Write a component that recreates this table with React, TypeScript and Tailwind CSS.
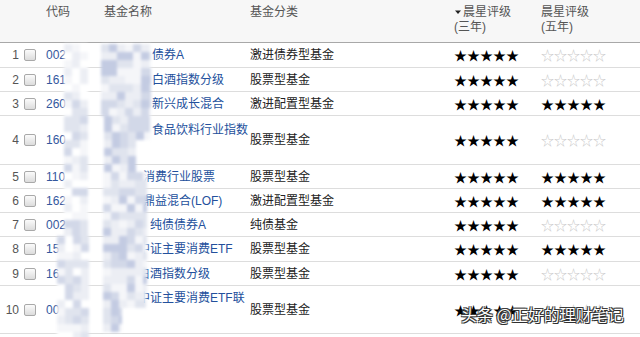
import React from "react";

type Row = {
  no: string;
  code: string;
  name: string;
  nameX: number;
  cat: string;
  s3: number;
  s5: number;
  h: number;
  double?: boolean;
  namePt?: number;
};

const rows: Row[] = [
  { no: "1", code: "002", name: "债券A", nameX: 152, cat: "激进债券型基金", s3: 5, s5: 0, h: 25 },
  { no: "2", code: "161", name: "白酒指数分级", nameX: 152, cat: "股票型基金", s3: 5, s5: 0, h: 24 },
  { no: "3", code: "260", name: "新兴成长混合", nameX: 152, cat: "激进配置型基金", s3: 5, s5: 5, h: 24 },
  { no: "4", code: "160", name: "食品饮料行业指数", nameX: 152, cat: "股票型基金", s3: 5, s5: 0, h: 49, double: true, namePt: 3 },
  { no: "5", code: "110", name: "消费行业股票", nameX: 143, cat: "股票型基金", s3: 5, s5: 5, h: 24 },
  { no: "6", code: "162", name: "鼎益混合(LOF)", nameX: 143, cat: "激进配置型基金", s3: 5, s5: 5, h: 24 },
  { no: "7", code: "002", name: "纯债债券A", nameX: 150, cat: "纯债基金", s3: 5, s5: 0, h: 24 },
  { no: "8", code: "150", name: "中证主要消费ETF", nameX: 138, cat: "股票型基金", s3: 5, s5: 5, h: 25 },
  { no: "9", code: "160", name: "白酒指数分级", nameX: 138, cat: "股票型基金", s3: 5, s5: 0, h: 24 },
  { no: "10", code: "000", name: "中证主要消费ETF联", nameX: 138, cat: "股票型基金", s3: 5, s5: 0, h: 48, double: true, namePt: 1 },
];

const palette = ["#ffffff", "#f5f6f9", "#eceef4", "#e0e4ee", "#d2d8e8", "#c3cbe2"];

function makeTiles() {
  let seed = 17;
  const rnd = () => {
    seed = (seed * 1103515245 + 12345) % 2147483648;
    return seed / 2147483648;
  };
  const tiles: { x: number; y: number; w: number; h: number; c: string }[] = [];
  // code column mosaic
  for (let y = 44; y < 335; y += 8) {
    const x0 = y >= 236 ? 57 : 64;
    for (let x = x0; x < 88; x += 8) {
      const r = rnd();
      const idx = y < 85 ? Math.floor(r * 3) : Math.floor(r * 5);
      tiles.push({ x, y, w: 8, h: 8, c: palette[idx] });
    }
  }
  // name column mosaic
  for (let y = 44; y < 332; y += 8) {
    let x0 = 101;
    let x1 = 151;
    if (y >= 116 && y < 140) { x0 = 104; x1 = 150; }
    else if (y >= 140 && y < 165) { x0 = 104; x1 = 136; }
    else if (y >= 165 && y < 286) { x0 = 103; x1 = 147; }
    else if (y >= 286 && y < 308) { x0 = 103; x1 = 146; }
    else if (y >= 308) { x0 = 103; x1 = 122; }
    for (let x = x0; x < x1; x += 8) {
      const r = rnd();
      const idx = 1 + Math.floor(r * 5);
      tiles.push({ x, y, w: Math.min(8, x1 - x), h: 8, c: palette[Math.min(idx, 5)] });
    }
  }
  return tiles;
}

const tiles = makeTiles();

function Stars({ n }: { n: number }) {
  if (n === 0) {
    return <span className="text-[13px] text-[#cccccc]">☆☆☆☆☆</span>;
  }
  return <span className="text-[13px] text-black">★★★★★</span>;
}

export default function App() {
  return (
    <div
      className="relative w-[640px] h-[337px] overflow-hidden bg-white text-[12px]"
      style={{ fontFamily: '"Liberation Sans", "Noto Sans CJK SC", sans-serif' }}
    >
      {/* header */}
      <div className="flex h-[43px] bg-[#f7f7f7] border-b border-[#a8a8a8] text-[#555] leading-[14px] pt-[5px]">
        <div className="w-[46px]" />
        <div className="w-[58px]">代码</div>
        <div className="w-[146px]">基金名称</div>
        <div className="w-[204px]">基金分类</div>
        <div className="w-[87px]">
          <div className="flex items-center">
            <svg width="8" height="6" viewBox="0 0 8 6" className="mr-[1px]">
              <path d="M1 1.5 L7 1.5 L4 5 Z" fill="#222" />
            </svg>
            <span>晨星评级</span>
          </div>
          <div className="mt-[1px]">(三年)</div>
        </div>
        <div className="flex-1">
          <div>晨星评级</div>
          <div className="mt-[1px]">(五年)</div>
        </div>
      </div>

      {/* rows */}
      {rows.map((r) => (
        <div
          key={r.no}
          className="flex items-center border-b border-[#dddddd] box-border"
          style={{ height: r.h }}
        >
          <div className="w-[19px] text-right text-[#555]">{r.no}</div>
          <div className="w-[27px] flex">
            <div className="ml-[5px] w-[12px] h-[12px] rounded-[2px] border border-[#a9a9a9] bg-gradient-to-b from-[#fbfbfb] to-[#dcdcdc]" />
          </div>
          <div className="w-[58px] text-[#34579e]">{r.code}</div>
          <div
            className={`w-[146px] self-stretch flex text-[#23509c] whitespace-nowrap overflow-hidden ${r.double ? "items-start" : "items-center"}`}
            style={{ paddingLeft: r.nameX - 104, paddingTop: r.namePt ?? 0 }}
          >
            <span className="leading-[22px]">{r.name}</span>
          </div>
          <div className="w-[204px] text-[#222]">{r.cat}</div>
          <div className="w-[87px] leading-[16px]" style={{ fontFamily: '"Noto Sans CJK SC", sans-serif' }}>
            <Stars n={r.s3} />
          </div>
          <div className="flex-1 leading-[16px]" style={{ fontFamily: '"Noto Sans CJK SC", sans-serif' }}>
            <Stars n={r.s5} />
          </div>
        </div>
      ))}

      {/* pixelated mosaic overlay */}
      <div className="absolute inset-0 pointer-events-none blur-[1.5px]">
        {tiles.map((t, i) => (
          <div
            key={i}
            className="absolute"
            style={{ left: t.x, top: t.y, width: t.w, height: t.h, background: t.c }}
          />
        ))}
      </div>

      {/* watermark */}
      <div
        className="absolute left-[461px] top-[302px] text-[16px] leading-[24px] text-white whitespace-nowrap [text-shadow:0_0_1px_#000,1px_1px_0_#333,-1px_-1px_0_#444,1px_-1px_0_#444,-1px_1px_0_#444]"
        style={{ fontFamily: '"Noto Sans CJK SC", sans-serif' }}
      >
        头条 @正好的理财笔记
      </div>
    </div>
  );
}
